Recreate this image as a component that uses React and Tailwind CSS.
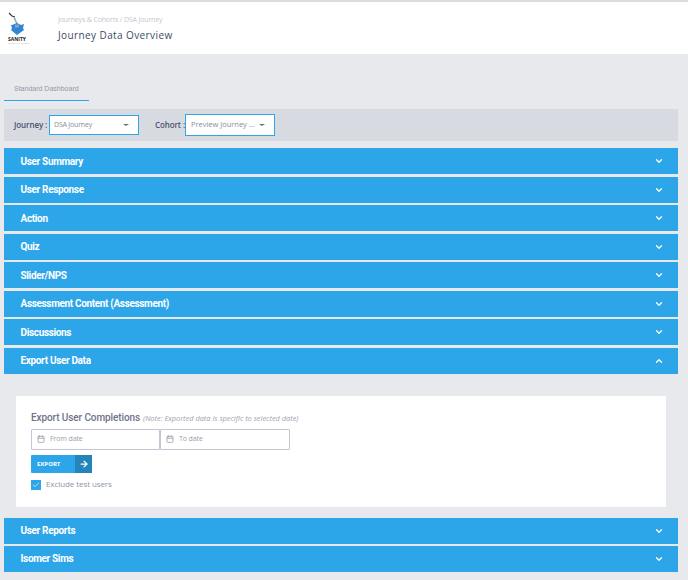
import React from "react";
import { ChevronDown, ChevronUp, Calendar, ArrowRight, Check } from "lucide-react";

function Section({ title, open }) {
    return (
        <div className="flex items-center justify-between h-[26px] mx-1 w-[674px] pl-[16.5px] pr-[14px] bg-[#2da6e9] text-white">
            <span className="text-[10px] font-bold font-['Roboto',sans-serif] tracking-[-0.34px]">{title}</span>
            {open ? <ChevronUp className="w-2.5 h-2.5" strokeWidth={3} /> : <ChevronDown className="w-2.5 h-2.5" strokeWidth={3} />}
        </div>
    );
}

function Dropdown({ label, className, textClass }) {
    return (
        <div className={`flex items-center justify-between w-[90px] bg-white border border-[#2da6e9] pr-[9px] ${className}`}>
            <span className={`text-[#8a8d99] ${textClass}`}>{label}</span>
            <span className="w-0 h-0 border-x-[3px] border-x-transparent border-t-[2.5px] border-t-[#6b6e7a]"></span>
        </div>
    );
}

function DateInput({ label, width }) {
    return (
        <div className={`flex items-center gap-[5px] h-[21px] pl-[5px] border border-[#c5c4d3] rounded-[1px] ${width}`}>
            <Calendar className="w-2 h-2 text-[#8c8ea0]" strokeWidth={2} />
            <span className="text-[7px] text-[#9a9cab] tracking-[-0.1px]">{label}</span>
        </div>
    );
}

const topSections = ["User Summary", "User Response", "Action", "Quiz", "Slider/NPS", "Assessment Content (Assessment)", "Discussions"];

export default function App() {
    return (
        <div className="w-[688px] h-[580px] overflow-hidden bg-[#e8e9ed] font-['Open_Sans',sans-serif]">

            {/* Header */}
            <div className="flex items-center h-[54px] bg-white border-t-2 border-[#dcdcdc]">
                <div className="flex flex-col items-start w-[58px] shrink-0 pl-[8px]">
                    <svg width="18" height="24" viewBox="0 0 18 24">
                        <path d="M1 1l3 3 3 1" stroke="#333a4a" strokeWidth="1.2" fill="none" />
                        <path d="M6 5l3 7" stroke="#9aa0ac" strokeWidth="1.5" fill="none" />
                        <path d="M4 13l5-2 4 2 3-1-1 4 1 2-7 5-6-5 1-2-1-3z" fill="#2f86d6" />
                        <rect x="7" y="12.5" width="4" height="3" fill="#8fa3b8" />
                    </svg>
                    <span className="text-[5px] font-bold text-[#222] leading-[5px] mt-[1px]">SANITY</span>
                    <span className="text-[2.5px] text-[#b5b5b5] leading-[3px] whitespace-nowrap">learning &amp; success</span>
                </div>
                <div className="flex flex-col">
                    <span className="text-[7px] leading-[10px] text-[#c5c6ce] tracking-[-0.15px]">Journeys &amp; Cohorts / DSA Journey</span>
                    <h1 className="mt-[4px] text-[10px] leading-[12px] font-medium text-[#3d4a66] tracking-[0.4px]">Journey Data Overview</h1>
                </div>
            </div>

            {/* Tab */}
            <div className="pt-[27px] h-[55px]">
                <div className="ml-1 w-[85px] h-[20px] border-b border-[#2da6e9] pl-[10px]">
                    <span className="block text-[7px] leading-[15px] text-[#9598a8] font-['Liberation_Sans',sans-serif]">Standard Dashboard</span>
                </div>
            </div>

            {/* Filters */}
            <div className="flex items-center h-8 mx-1 w-[674px] bg-[#d8dae2] pl-[10px]">
                <span className="w-[35px] text-[8px] font-semibold text-[#4a5270] tracking-[-0.1px]">Journey :</span>
                <Dropdown label="DSA Journey" className="h-5 pl-[4px]" textClass="text-[7px] tracking-[-0.2px]" />
                <span className="ml-4 w-[30px] text-[8px] font-semibold text-[#4a5270] tracking-[-0.1px]">Cohort :</span>
                <Dropdown label="Preview Journey ..." className="h-[22px] pl-[5px]" textClass="text-[7.5px] tracking-[-0.02px]" />
            </div>

            {/* Sections */}
            <div className="flex flex-col gap-[2.5px] mt-[7px]">
                {topSections.map((title) => (
                    <Section key={title} title={title} />
                ))}
                <Section title="Export User Data" open />
            </div>

            {/* Export panel */}
            <div className="mt-[22px] ml-4 w-[650px] h-[111px] bg-white pl-[15px] pt-[16px]">
                <div className="flex items-baseline gap-[3px] leading-[12px]">
                    <span className="text-[10px] font-medium font-['Roboto',sans-serif] text-[#6f7389] tracking-[-0.1px]">Export User Completions</span>
                    <span className="text-[7.4px] italic text-[#9fa1b3]">(Note: Exported data is specific to selected date)</span>
                </div>
                <div className="flex mt-[5px]">
                    <DateInput label="From date" width="w-[129px]" />
                    <DateInput label="To date" width="w-[130px]" />
                </div>
                <div className="flex items-center mt-[5px] w-[61px] h-[18px] bg-[#2da6e9] rounded-[1px]">
                    <span className="pl-[6px] pt-[1px] w-[44px] text-[6px] font-bold text-white">EXPORT</span>
                    <span className="flex items-center justify-center w-[17px] h-full bg-[#2585ba]">
                        <ArrowRight className="w-2.5 h-2.5 text-white" strokeWidth={3} />
                    </span>
                </div>
                <div className="flex items-start gap-[5px] mt-[7px]">
                    <span className="flex items-center justify-center w-[10px] h-[10px] bg-[#2da6e9]">
                        <Check className="w-2 h-2 text-white" strokeWidth={2} />
                    </span>
                    <span className="text-[8px] leading-[7px] text-[#9093a6] tracking-[-0.08px]">Exclude test users</span>
                </div>
            </div>

            <div className="flex flex-col gap-[2px] mt-[11px]">
                <Section title="User Reports" />
                <Section title="Isomer Sims" />
            </div>
        </div>
    );
}
